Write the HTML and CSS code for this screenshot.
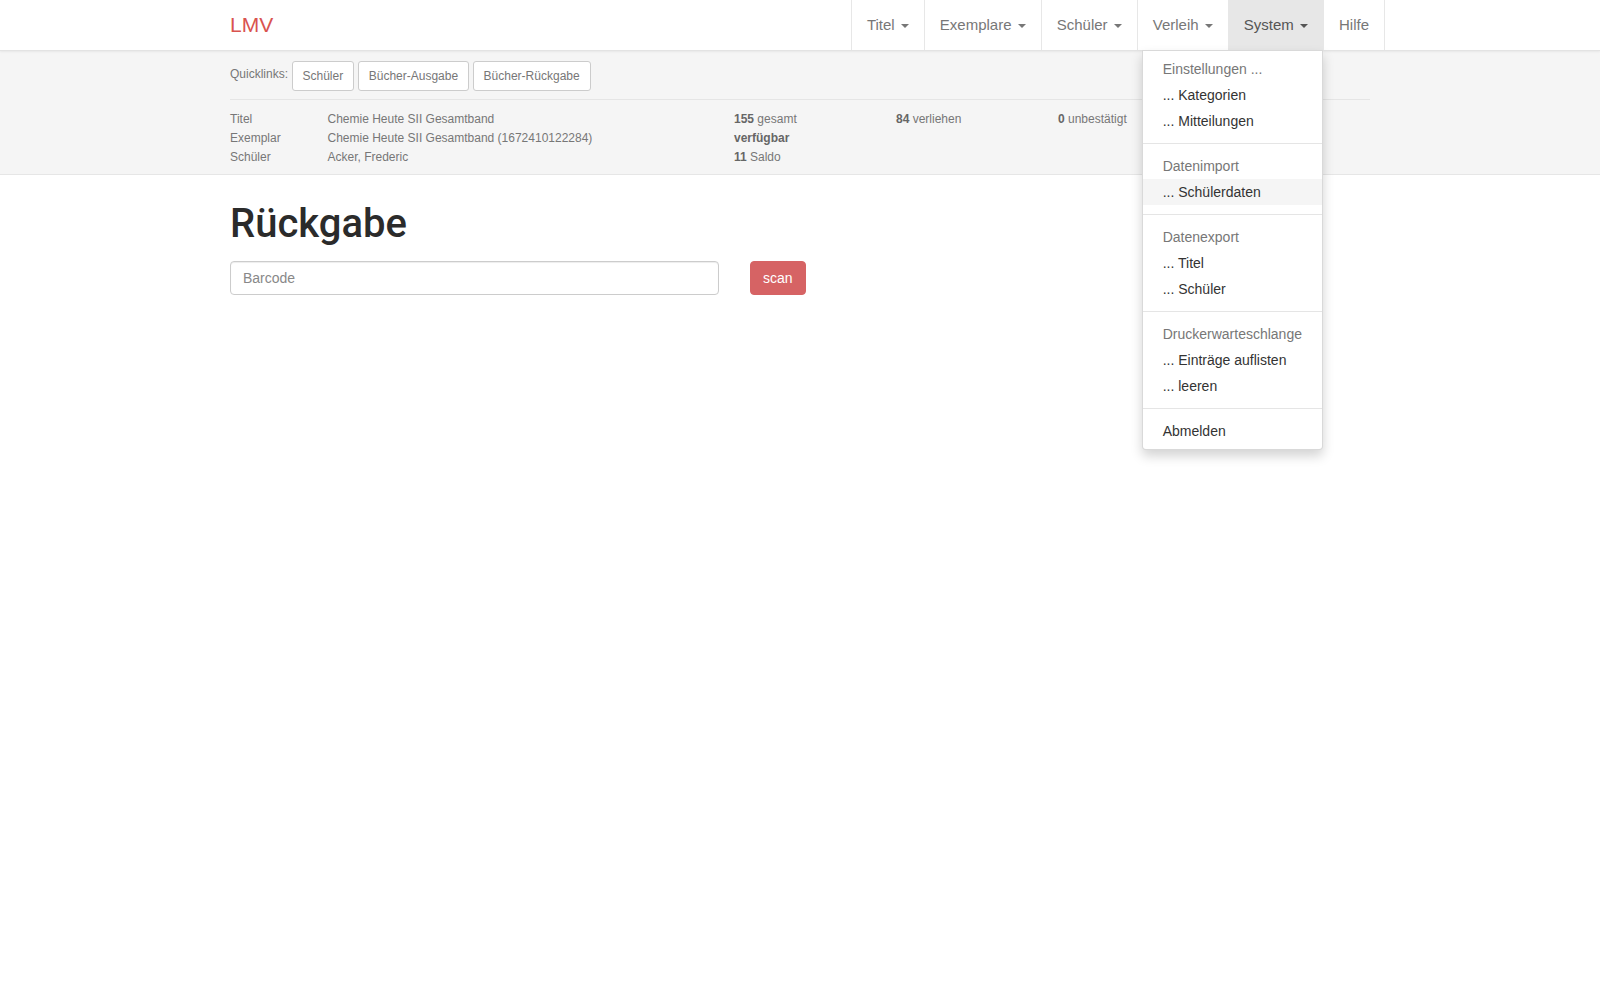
FILE: index.html
```html
<!DOCTYPE html>
<html lang="de">
<head>
  <meta charset="UTF-8" />
  <title>LMV - Rückgabe</title>
  <link rel="stylesheet" href="styles.css">
</head>
<body>

<!-- Navigation -->
<nav class="navbar">
  <div class="container navbar-inner">
    <a class="brand" href="#">LMV</a>
    <ul class="nav">
      <li><a href="#">Titel <span class="caret"></span></a></li>
      <li><a href="#">Exemplare <span class="caret"></span></a></li>
      <li><a href="#">Schüler <span class="caret"></span></a></li>
      <li><a href="#">Verleih <span class="caret"></span></a></li>
      <li class="open">
        <a href="#">System <span class="caret"></span></a>
        <ul class="dropdown">
          <li class="dropdown-header">Einstellungen ...</li>
          <li><a href="#">... Kategorien</a></li>
          <li><a href="#">... Mitteilungen</a></li>
          <li class="divider"></li>
          <li class="dropdown-header">Datenimport</li>
          <li class="active"><a href="#">... Schülerdaten</a></li>
          <li class="divider"></li>
          <li class="dropdown-header">Datenexport</li>
          <li><a href="#">... Titel</a></li>
          <li><a href="#">... Schüler</a></li>
          <li class="divider"></li>
          <li class="dropdown-header">Druckerwarteschlange</li>
          <li><a href="#">... Einträge auflisten</a></li>
          <li><a href="#">... leeren</a></li>
          <li class="divider"></li>
          <li><a href="#">Abmelden</a></li>
        </ul>
      </li>
      <li><a href="#">Hilfe</a></li>
    </ul>
  </div>
</nav>

<!-- Kontextleiste -->
<div class="context-bar">
  <div class="container">
    <div class="quicklinks">
      <span class="quicklinks-label">Quicklinks:</span>
      <a class="btn-sm" href="#">Schüler</a>
      <a class="btn-sm" href="#">Bücher-Ausgabe</a>
      <a class="btn-sm" href="#">Bücher-Rückgabe</a>
    </div>
    <hr>
    <div class="status">
      <span>Titel</span>
      <span>Chemie Heute SII Gesamtband</span>
      <span><b>155</b> gesamt</span>
      <span><b>84</b> verliehen</span>
      <span><b>0</b> unbestätigt</span>
      <span></span>

      <span>Exemplar</span>
      <span>Chemie Heute SII Gesamtband (1672410122284)</span>
      <span><b>verfügbar</b></span>
      <span></span>
      <span></span>
      <span></span>

      <span>Schüler</span>
      <span>Acker, Frederic</span>
      <span><b>11</b> Saldo</span>
      <span></span>
      <span></span>
      <span></span>
    </div>
  </div>
</div>

<!-- Inhalt -->
<div class="container">
  <h1>Rückgabe</h1>
  <form class="scan-form">
    <input type="text" class="form-control" placeholder="Barcode">
    <button type="button" class="btn-scan">scan</button>
  </form>
</div>

</body>
</html>
```

FILE: styles.css
```css
html {
  height: 100%;
}

body {
  margin: 0;
  min-height: 100%;
  font-family: "Liberation Sans", Arial, Helvetica, sans-serif;
  font-size: 14px;
  line-height: 1.42857;
  color: #333;
  background: #fff;
}

a {
  text-decoration: none;
}

.container {
  width: 1170px;
  margin: 0 auto;
  padding: 0 15px;
  box-sizing: border-box;
}

/* Navigation */
.navbar {
  background: #fff;
  border-bottom: 1px solid #e3e3e3;
  box-shadow: 0 1px 2px rgba(0, 0, 0, 0.06);
  position: relative;
  z-index: 10;
}

.navbar-inner {
  display: flex;
  justify-content: space-between;
  height: 50px;
}

.brand {
  font-size: 21px;
  line-height: 20px;
  padding: 15px 0;
  color: #d9534f;
}

.nav {
  list-style: none;
  margin: 0 -15px 0 0;
  padding: 0;
  display: flex;
}

.nav > li {
  position: relative;
  border-left: 1px solid #e7e7e7;
}

.nav > li:last-child {
  border-right: 1px solid #e7e7e7;
}

.nav > li > a {
  display: block;
  padding: 15px;
  line-height: 20px;
  font-size: 15px;
  color: #777;
}

.nav > li.open > a {
  background: #e7e7e7;
  color: #555;
}

.caret {
  display: inline-block;
  width: 0;
  height: 0;
  margin-left: 2px;
  vertical-align: middle;
  border-top: 4px solid #777;
  border-left: 4px solid transparent;
  border-right: 4px solid transparent;
}

.open .caret {
  border-top-color: #555;
}

/* Dropdown */
.dropdown {
  position: absolute;
  top: 100%;
  right: 0;
  min-width: 160px;
  margin: 0;
  padding: 5px 0;
  list-style: none;
  background: #fff;
  border: 1px solid rgba(0, 0, 0, 0.15);
  border-radius: 0 0 4px 4px;
  box-shadow: 0 6px 12px rgba(0, 0, 0, 0.175);
  white-space: nowrap;
  font-size: 14px;
}

.dropdown li a {
  display: block;
  padding: 3px 20px;
  line-height: 20px;
  color: #333;
}

.dropdown li.active a {
  background: #f5f5f5;
}

.dropdown-header {
  padding: 3px 20px;
  line-height: 20px;
  color: #777;
}

.divider {
  height: 1px;
  margin: 9px 0;
  background: #e5e5e5;
}

/* Kontextleiste */
.context-bar {
  background: #f5f5f5;
  border-bottom: 1px solid #e6e6e6;
  padding: 10px 0 8px;
  font-size: 12px;
  color: #777;
}

.quicklinks {
  display: flex;
  align-items: center;
  gap: 3.5px;
}

.quicklinks-label {
  padding-bottom: 3px;
}

.btn-sm {
  display: inline-block;
  padding: 5px 10px;
  font-size: 12px;
  line-height: 18px;
  color: #777;
  background: #fff;
  border: 1px solid #ccc;
  border-radius: 3px;
}

.context-bar hr {
  border: 0;
  border-top: 1px solid #e5e5e5;
  margin: 8px 0 10px;
}

.status {
  display: grid;
  grid-template-columns: 97.5px 406.5px 162px 162px 162px 1fr;
  line-height: 18.75px;
}

.status b {
  color: #666;
}

/* Inhalt */
h1 {
  font-family: Roboto, "Liberation Sans", Arial, sans-serif;
  font-weight: 500;
  font-size: 40px;
  line-height: 44px;
  color: #2b2b2b;
  margin: 27px 0 15px;
}

.scan-form {
  display: flex;
  gap: 31px;
  margin: 0;
}

.form-control {
  width: 489px;
  height: 34px;
  box-sizing: border-box;
  padding: 6px 12px;
  font-family: inherit;
  font-size: 14px;
  color: #555;
  border: 1px solid #ccc;
  border-radius: 4px;
  box-shadow: inset 0 1px 1px rgba(0, 0, 0, 0.075);
}

.form-control::placeholder {
  color: #888;
}

.btn-scan {
  height: 34px;
  padding: 6px 12px;
  font-family: inherit;
  font-size: 14px;
  color: #fff;
  background: #d66364;
  border: 1px solid #d66364;
  border-radius: 4px;
}
```
